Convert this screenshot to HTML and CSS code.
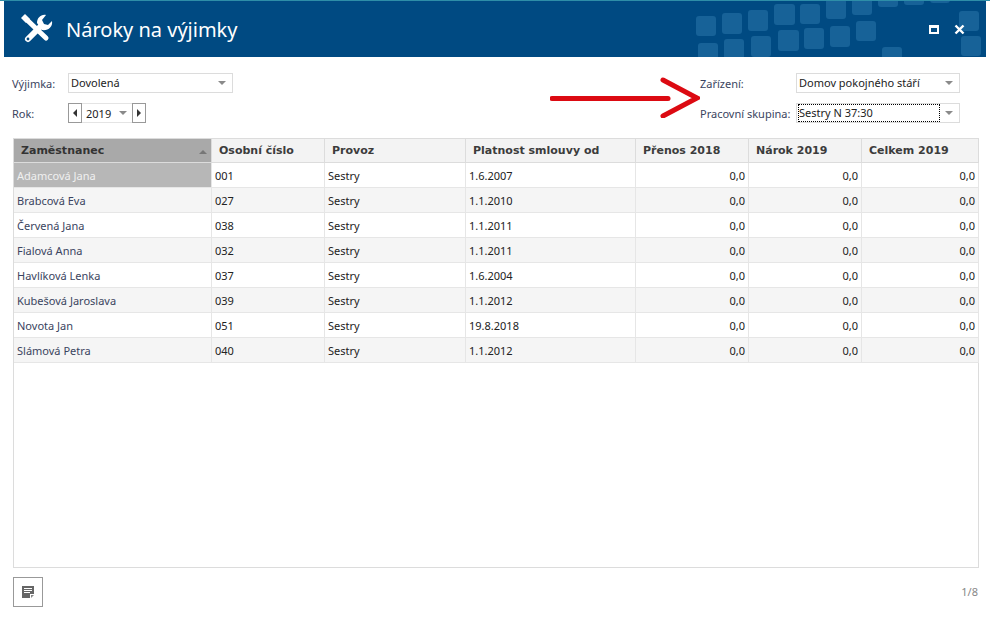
FILE: index.html
```html
<!DOCTYPE html>
<html lang="cs">
<head>
<meta charset="utf-8">
<title>Nároky na výjimky</title>
<link rel="stylesheet" href="styles.css">
</head>
<body>
<div class="topline"></div>
<div class="window">
  <header class="titlebar">
    <svg class="tiles" width="320" height="56" viewBox="0 0 320 56">
      <g fill="#2a76ab" opacity=".55">
        <rect x="30" y="15" width="20" height="20" rx="3"/><rect x="56" y="12" width="20" height="21" rx="3"/>
        <rect x="82" y="9" width="20" height="21" rx="3"/><rect x="108" y="3" width="21" height="21" rx="3"/>
        <rect x="134" y="3" width="20" height="20" rx="3"/><rect x="160" y="-2" width="20" height="20" rx="3"/>
        <rect x="186" y="-4" width="20" height="18" rx="3"/><rect x="212" y="-8" width="20" height="14" rx="3"/>
        <rect x="238" y="-8" width="20" height="12" rx="3"/><rect x="264" y="-8" width="20" height="10" rx="3"/>
        <rect x="32" y="42" width="20" height="18" rx="3"/><rect x="58" y="38" width="20" height="20" rx="3"/>
        <rect x="85" y="35" width="20" height="21" rx="3"/><rect x="112" y="29" width="21" height="21" rx="3"/>
        <rect x="138" y="27" width="20" height="21" rx="3"/><rect x="164" y="25" width="20" height="21" rx="3"/>
        <rect x="190" y="20" width="20" height="20" rx="3"/><rect x="216" y="46" width="20" height="12" rx="3"/>
        <rect x="293" y="10" width="20" height="20" rx="3"/><rect x="295" y="35" width="20" height="20" rx="3"/>
      </g>
    </svg>
    <svg class="appicon" width="33" height="33" viewBox="0 0 33 33">
      <g fill="none" stroke="#fff" stroke-linecap="round">
        <path d="M5 5 L26 25" stroke-width="5"/>
        <path d="M8 26 L21 13" stroke-width="6"/>
      </g>
      <path d="M17 10 C17 5 21 1 26 2 L22 7 L24 11 L28 12 L32 8 C33 14 28 18 22 17 Z" fill="#fff"/>
      <path d="M1 5 L5 1 L10 6 L6 10 Z" fill="#fff"/>
      <circle cx="8" cy="26" r="1.4" fill="#004a82"/>
    </svg>
    <h1 class="title">Nároky na výjimky</h1>
    <span class="winbtns">
      <svg width="10" height="9" viewBox="0 0 10 9"><path d="M0 0H10V9H0ZM2 3V7H8V3Z" fill="#fff" fill-rule="evenodd"/></svg>
      <svg width="11" height="11" viewBox="0 0 11 11"><path d="M1.5 1.5L9.5 9.5M9.5 1.5L1.5 9.5" stroke="#fff" stroke-width="2.4"/></svg>
    </span>
  </header>

  <section class="filters">
    <div class="filter-col">
      <div class="field">
        <label class="lbl lbl-left">Výjimka:</label>
        <div class="combo combo-wide"><span class="combo-text">Dovolená</span><i class="caret"></i></div>
      </div>
      <div class="field">
        <label class="lbl lbl-left">Rok:</label>
        <div class="spin">
          <button class="spin-btn"><i class="tri-l"></i></button>
          <div class="spin-val"><span>2019</span><i class="caret"></i></div>
          <button class="spin-btn"><i class="tri-r"></i></button>
        </div>
      </div>
    </div>
    <svg class="arrow" width="150" height="42" viewBox="0 0 150 42">
      <path d="M2 22.5 L118 22.5" stroke="#dc0a12" stroke-width="5" stroke-linecap="round" fill="none"/>
      <path d="M113 4 L147 22 L113 40" stroke="#dc0a12" stroke-width="5" stroke-linecap="round" fill="none"/>
    </svg>
    <div class="filter-col">
      <div class="field">
        <label class="lbl lbl-right">Zařízení:</label>
        <div class="combo combo-r"><span class="combo-text">Domov pokojného stáří</span><i class="caret"></i></div>
      </div>
      <div class="field">
        <label class="lbl lbl-right">Pracovní skupina:</label>
        <div class="combo combo-r"><span class="combo-text focused">Sestry N 37:30</span><i class="caret"></i></div>
      </div>
    </div>
  </section>

  <section class="gridbox">
    <table class="grid">
      <colgroup>
        <col class="c1"><col class="c2"><col class="c3"><col class="c4"><col class="c5"><col class="c6"><col class="c7">
      </colgroup>
      <thead>
        <tr>
          <th class="sorted">Zaměstnanec<i class="sort"></i></th>
          <th>Osobní číslo</th><th>Provoz</th><th>Platnost smlouvy od</th><th>Přenos 2018</th><th>Nárok 2019</th><th>Celkem 2019</th>
        </tr>
      </thead>
      <tbody>
        <tr class="sel"><td class="name">Adamcová Jana</td><td>001</td><td>Sestry</td><td>1.6.2007</td><td class="num">0,0</td><td class="num">0,0</td><td class="num">0,0</td></tr>
        <tr><td class="name">Brabcová Eva</td><td>027</td><td>Sestry</td><td>1.1.2010</td><td class="num">0,0</td><td class="num">0,0</td><td class="num">0,0</td></tr>
        <tr><td class="name">Červená Jana</td><td>038</td><td>Sestry</td><td>1.1.2011</td><td class="num">0,0</td><td class="num">0,0</td><td class="num">0,0</td></tr>
        <tr><td class="name">Fialová Anna</td><td>032</td><td>Sestry</td><td>1.1.2011</td><td class="num">0,0</td><td class="num">0,0</td><td class="num">0,0</td></tr>
        <tr><td class="name">Havlíková Lenka</td><td>037</td><td>Sestry</td><td>1.6.2004</td><td class="num">0,0</td><td class="num">0,0</td><td class="num">0,0</td></tr>
        <tr><td class="name">Kubešová Jaroslava</td><td>039</td><td>Sestry</td><td>1.1.2012</td><td class="num">0,0</td><td class="num">0,0</td><td class="num">0,0</td></tr>
        <tr><td class="name">Novota Jan</td><td>051</td><td>Sestry</td><td>19.8.2018</td><td class="num">0,0</td><td class="num">0,0</td><td class="num">0,0</td></tr>
        <tr><td class="name">Slámová Petra</td><td>040</td><td>Sestry</td><td>1.1.2012</td><td class="num">0,0</td><td class="num">0,0</td><td class="num">0,0</td></tr>
      </tbody>
    </table>
  </section>

  <footer class="footer">
    <button class="notebtn">
      <svg width="12" height="12" viewBox="0 0 12 12">
        <path d="M0 0H12V8H8V12H0Z" fill="#666"/>
        <path d="M2 2.5H10M2 4.5H10M2 6.5H8" stroke="#fff" stroke-width="1" fill="none"/>
        <path d="M9 9H12L9 12Z" fill="#888"/>
      </svg>
    </button>
    <span class="count">1/8</span>
  </footer>
</div>
</body>
</html>
```
FILE: styles.css
```css
* { box-sizing: border-box; }
html, body { margin: 0; padding: 0; background: #fff; }
body { width: 990px; height: 618px; overflow: hidden; font-family: "Noto Sans", "Open Sans", sans-serif; font-size: 11px; color: #222; }
.topline { height: 1px; background: #2e8ea8; }
.window { width: 982px; margin-left: 4px; }

.titlebar { position: relative; height: 56px; background: #004a82; display: flex; align-items: center; padding: 0 21px 0 16px; overflow: hidden; }
.tiles { position: absolute; right: 0; top: 0; }
.appicon { position: relative; flex: none; }
.title { position: relative; margin: 0 0 0 13px; font: 400 20px "Noto Sans", sans-serif; color: #fff; flex: 1; }
.winbtns { position: relative; display: flex; align-items: center; gap: 15px; }
.winbtns svg { display: block; }

.filters { display: flex; padding: 16px 7px 0 8px; height: 81px; align-items: flex-start; }
.filter-col { display: flex; flex-direction: column; gap: 10px; }
.filter-col:first-child { flex: none; width: 221px; }
.filter-col:last-child { flex: none; width: 260px; }
.field { display: flex; align-items: center; height: 20px; }
.lbl { color: #3a4460; flex: none; }
.lbl-left { width: 56px; }
.lbl-right { width: 96px; }
.combo { height: 20px; border: 1px solid #dcdcdc; background: #fff; display: flex; align-items: center; padding: 0 6px 0 2px; color: #222; }
.combo-wide { width: 165px; }
.combo-r { width: 165px; }
.combo-text { flex: 1; line-height: 16px; height: 16px; padding: 0 0 0 0; }
.focused { outline: 1px dotted #000; outline-offset: 0; margin-right: 6px; }
.caret { flex: none; width: 0; height: 0; border-left: 4.5px solid transparent; border-right: 4.5px solid transparent; border-top: 4px solid #8a8a8a; }

.spin { display: flex; height: 20px; }
.spin-btn { width: 14px; height: 20px; padding: 0; border: 1px solid #999; background: #fff; display: flex; align-items: center; justify-content: center; }
.spin-val { width: 50px; border: 1px solid #e4e4e4; border-left: 0; border-right: 0; display: flex; align-items: center; justify-content: space-between; padding: 0 5px 0 4px; }
.tri-l { width: 0; height: 0; border-top: 4px solid transparent; border-bottom: 4px solid transparent; border-right: 4px solid #333; }
.tri-r { width: 0; height: 0; border-top: 4px solid transparent; border-bottom: 4px solid transparent; border-left: 4px solid #333; }

.arrow { flex: none; margin: 3px 0 0 317px; }

.gridbox { width: 966px; height: 430px; margin-left: 9px; border: 1px solid #dcdcdc; border-top: 0; border-left: 1px solid #dcdcdc; }
.grid { width: 965px; border-collapse: separate; border-spacing: 0; table-layout: fixed; }
.c1 { width: 198px; } .c2 { width: 113px; } .c3 { width: 141px; } .c4 { width: 170px; } .c5 { width: 113px; } .c6 { width: 113px; } .c7 { width: 117px; }
.grid th { height: 25px; background: #f3f3f3; border-top: 1px solid #dcdcdc; border-right: 1px solid #dcdcdc; border-bottom: 1px solid #dcdcdc; text-align: left; padding: 0 7px; font: 700 11px "DejaVu Sans", sans-serif; color: #3c3c3c; position: relative; }
.grid th.sorted { background: #a9a9a9; color: #333; }
.sort { position: absolute; right: 4px; top: 11px; width: 0; height: 0; border-left: 4.5px solid transparent; border-right: 4.5px solid transparent; border-bottom: 4px solid #777; }
.grid td { height: 25px; padding: 0 3px; border-right: 1px solid #e6e6e6; border-bottom: 1px solid #e6e6e6; background: #fff; color: #222; white-space: nowrap; }
.grid tbody tr:nth-child(even) td { background: #f5f5f5; }
.grid td.name { color: #3a4460; }
.grid tr.sel td.name { background: #b7b7b7; color: #f0f0f0; }
.grid td.num { text-align: right; padding-right: 3px; }

.footer { display: flex; justify-content: space-between; align-items: flex-start; padding: 9px 8px 0 9px; }
.notebtn { width: 30px; height: 30px; border: 1px solid #999; background: #fff; padding: 0; display: flex; align-items: center; justify-content: center; }
.notebtn svg { display: block; }
.count { color: #888; margin-top: 7px; }
```
